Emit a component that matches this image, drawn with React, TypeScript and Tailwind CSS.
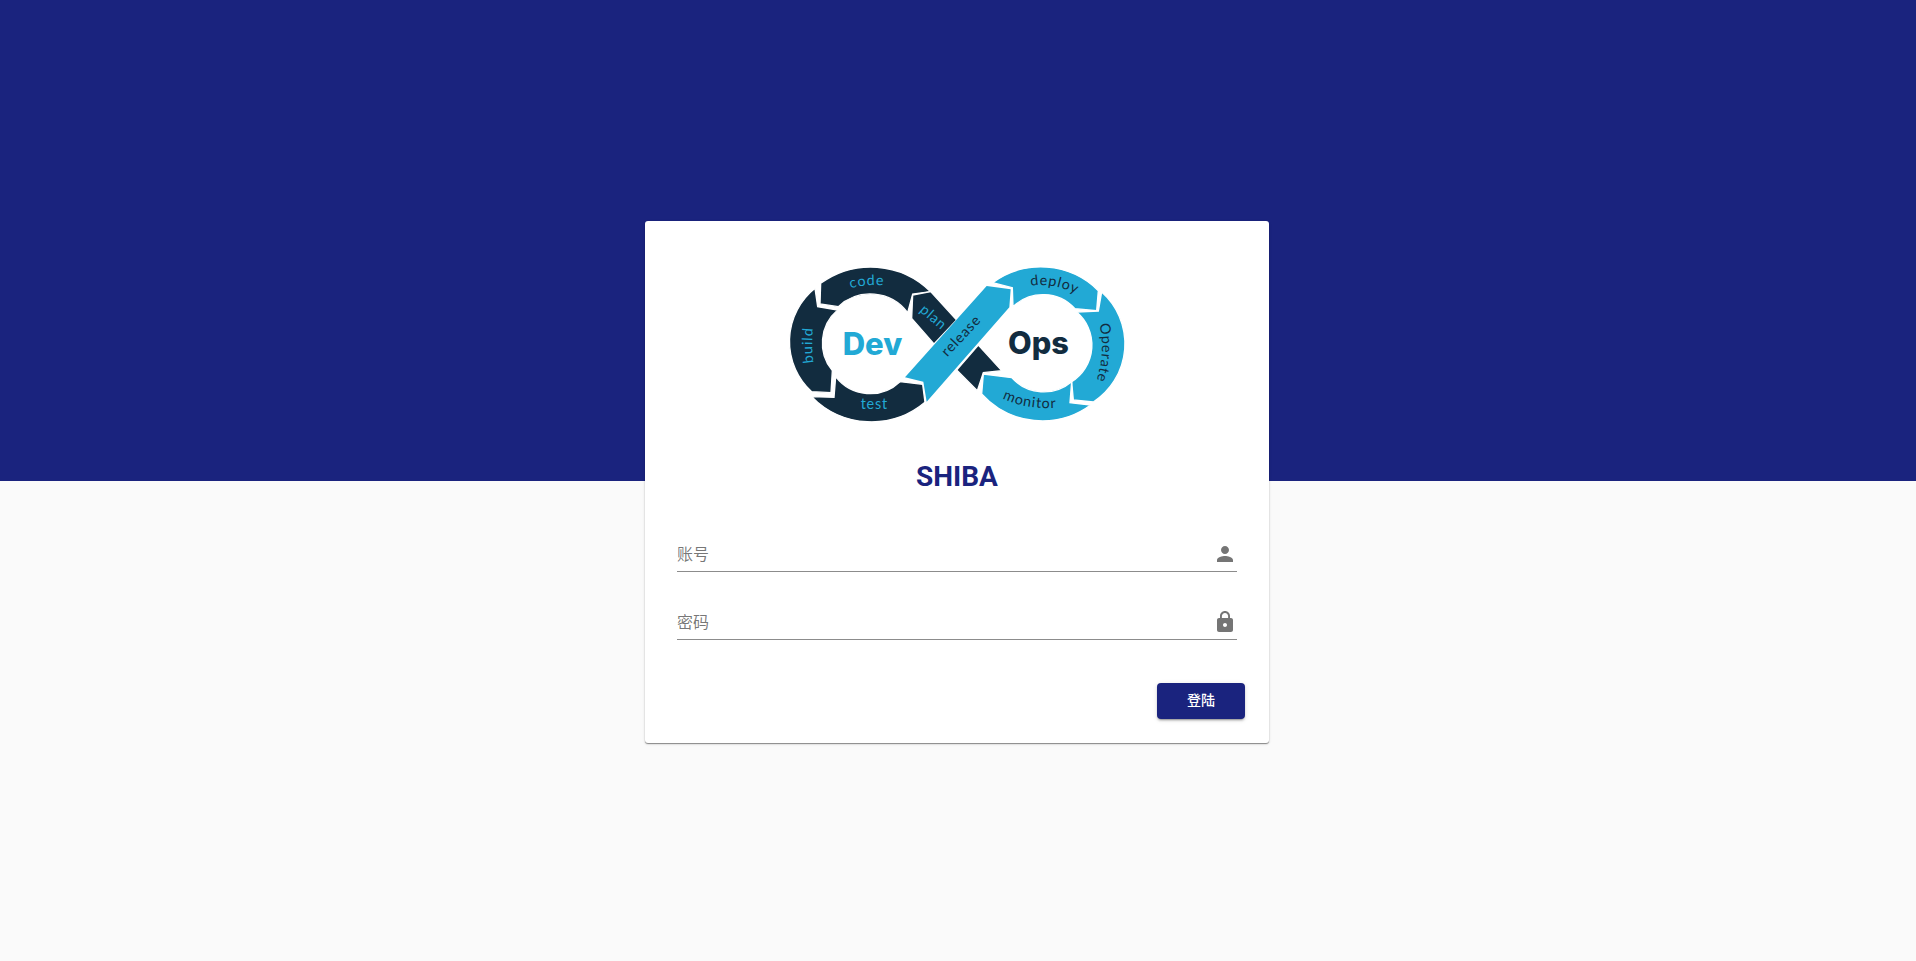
const DARK = "#122c3f"
const BLUE = "#22a9d5"

function DevOpsLogo() {
  return (
    <svg width="370" height="190" viewBox="0 0 1110 570" className="block">
      <defs>
        <path id="p-code" d="M242 115 Q290 100 360 108" />
        <path id="p-build" d="M131 338 Q122 285 131 215" />
        <path id="p-plan" d="M447 183 L535 258" />
        <path id="p-release" d="M532 322 L650 196" />
        <path id="p-deploy" d="M782 108 Q850 95 935 140" />
        <path id="p-operate" d="M988 222 Q1010 310 970 420" />
        <path id="p-monitor" d="M697 445 Q770 482 885 472" />
      </defs>
      {/* left loop */}
      <g fill={DARK} stroke="#fff" strokeWidth="4">
        <path d="M152 100 A255 255 0 0 1 482 125 L428 132 L413 188 A140 140 0 0 0 205 170 L150 162 Z" />
        <path d="M135 115 L143 170 L203 180 A130 130 0 0 0 187 362 L183 428 L125 425 A204 204 0 0 1 135 115 Z" />
        <path d="M197 380 A130 130 0 0 0 390 395 L458 403 L465 457 A250 250 0 0 1 125 440 L192 442 Z" />
        <path d="M428 135 L482 125 L560 210 L492 282 L425 205 Z" />
        <path d="M560 360 L625 285 L695 362 L640 368 L622 422 Z" />
      </g>
      {/* release arrow sits over the dark band */}
      <path d="M405 382 L650 108 L722 118 L718 172 L470 455 L460 395 Z" fill={BLUE} />
      {/* right loop */}
      <g fill={BLUE} stroke="#fff" strokeWidth="4">
        <path d="M668 98 A245 245 0 0 1 985 122 L980 182 L915 176 A130 130 0 0 0 729 170 L727 113 Z" />
        <path d="M995 126 A208 208 0 0 1 970 456 L910 450 L905 395 A130 130 0 0 0 920 186 L985 183 Z" />
        <path d="M640 372 L725 383 A130 130 0 0 0 905 395 L900 458 L962 465 A245 245 0 0 1 635 432 Z" />
      </g>
      <g fontFamily="Lato, sans-serif" fontSize="43" letterSpacing="2.5" fill={BLUE}>
        <text><textPath href="#p-code">code</textPath></text>
        <text><textPath href="#p-build">build</textPath></text>
        <text x="272" y="476">test</text>
        <text><textPath href="#p-plan">plan</textPath></text>
      </g>
      <g fontFamily="Lato, sans-serif" fontSize="43" letterSpacing="2.5" fill={DARK}>
        <text><textPath href="#p-release">release</textPath></text>
        <text><textPath href="#p-deploy">deploy</textPath></text>
        <text><textPath href="#p-operate">Operate</textPath></text>
        <text><textPath href="#p-monitor">monitor</textPath></text>
      </g>
      <text x="218" y="315" fontFamily="Inter, sans-serif" fontWeight="800" fontSize="93" fill={BLUE}>Dev</text>
      <text x="714" y="313" fontFamily="Inter, sans-serif" fontWeight="800" fontSize="92" fill={DARK}>Ops</text>
    </svg>
  )
}

function Field({ placeholder, type, icon }: { placeholder: string; type: string; icon: string }) {
  return (
    <div className="flex h-[33px] items-center border-b border-[#8c8c8c]">
      <input
        type={type}
        placeholder={placeholder}
        className="min-w-0 flex-1 bg-transparent text-base outline-none placeholder:text-black/55"
      />
      <svg width="24" height="24" viewBox="0 0 24 24" fill="rgba(0,0,0,0.54)" className="mb-[2px] shrink-0">
        <path d={icon} />
      </svg>
    </div>
  )
}

export default function App() {
  return (
    <div className="relative flex h-screen flex-col font-['Roboto','Noto_Sans_CJK_SC',sans-serif]">
      <div className="h-[481px] bg-[#1a237e]"></div>
      <div className="flex-1 bg-[#fafafa]"></div>

      <div className="absolute inset-0 flex items-center justify-center">
        <div className="mt-[3px] mr-[2px] flex h-[522px] w-[624px] flex-col rounded-[3px] bg-white shadow-[0_1px_1px_0_rgba(0,0,0,0.4),0_1px_3px_0_rgba(0,0,0,0.14)]">
          <div className="mt-[29px] flex justify-center pr-[4px]">
            <DevOpsLogo />
          </div>
          <h1 className="mt-[21px] text-center text-[28px] leading-8 font-bold text-[#1a237e]">SHIBA</h1>

          <div className="mt-[46px] flex flex-col gap-[35px] px-8">
            <Field
              placeholder="账号"
              type="text"
              icon="M12 12c2.21 0 4-1.79 4-4s-1.79-4-4-4-4 1.79-4 4 1.79 4 4 4zm0 2c-2.67 0-8 1.34-8 4v2h16v-2c0-2.66-5.33-4-8-4z"
            />
            <Field
              placeholder="密码"
              type="password"
              icon="M18 8h-1V6c0-2.76-2.24-5-5-5S7 3.24 7 6v2H6c-1.1 0-2 .9-2 2v10c0 1.1.9 2 2 2h12c1.1 0 2-.9 2-2V10c0-1.1-.9-2-2-2zm-6 9c-1.1 0-2-.9-2-2s.9-2 2-2 2 .9 2 2-.9 2-2 2zm3.1-9H8.9V6c0-1.71 1.39-3.1 3.1-3.1 1.71 0 3.1 1.39 3.1 3.1v2z"
            />
          </div>

          <div className="mt-auto flex justify-end pr-6 pb-6">
            <button className="h-9 w-[88px] rounded bg-[#1a237e] pb-[2px] text-sm font-medium text-white shadow-[0_3px_1px_-2px_rgba(0,0,0,0.2),0_2px_2px_0_rgba(0,0,0,0.14),0_1px_5px_0_rgba(0,0,0,0.12)]">
              登陆
            </button>
          </div>
        </div>
      </div>
    </div>
  )
}
